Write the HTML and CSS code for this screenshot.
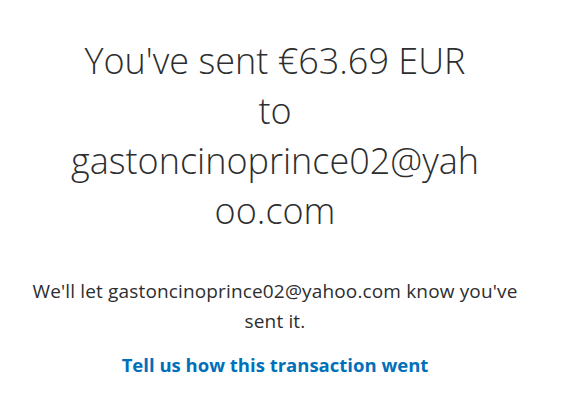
FILE: index.html
```html
<!DOCTYPE html>
<html>
<head>
<meta charset="utf-8">
<link rel="stylesheet" href="styles.css">
</head>
<body>
<main class="page">
  <h1 class="title">You've sent €63.69 EUR to gastoncinoprince02@yahoo.com</h1>
  <p class="note">We'll let gastoncinoprince02@yahoo.com know you've sent it.</p>
  <a class="link" href="#">Tell us how this transaction went</a>
</main>
</body>
</html>
```
FILE: styles.css
```css
html, body {
  margin: 0;
  padding: 0;
  background: #ffffff;
}
.page {
  width: 490px;
  margin-left: 30px;
  padding-top: 36px;
  display: flex;
  flex-direction: column;
  align-items: center;
  text-align: center;
  color: #2c2e2f;
  font-family: "Open Sans", sans-serif;
}
.title {
  margin: 0;
  width: 422px;
  font-size: 36px;
  font-weight: 300;
  line-height: 50px;
  overflow-wrap: break-word;
}
.note {
  margin: 40px 0 0;
  font-size: 19px;
  letter-spacing: 0.15px;
  line-height: 30px;
}
.link {
  margin-top: 16px;
  font-size: 18.5px;
  font-weight: 700;
  line-height: 26px;
  color: #0070ba;
  text-decoration: none;
}
```
